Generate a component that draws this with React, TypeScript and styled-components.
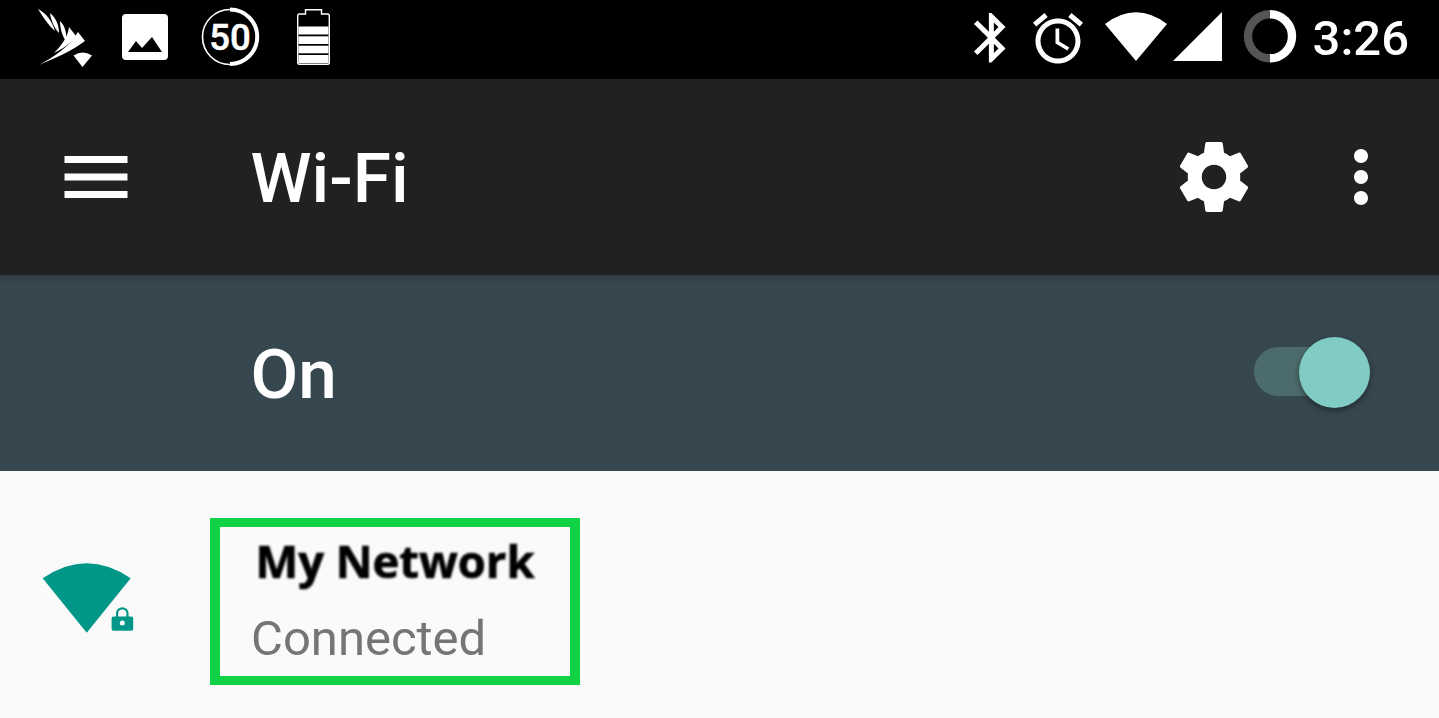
import React from "react";
import styled, { createGlobalStyle } from "styled-components";

const Global = createGlobalStyle`
  html, body { margin: 0; padding: 0; background: #fafafa; }
  body { width: 1439px; height: 718px; overflow: hidden; font-family: Roboto, "Liberation Sans", sans-serif; }
`;

const Screen = styled.div`
  width: 1439px;
  height: 718px;
  display: flex;
  flex-direction: column;
  overflow: hidden;
`;

const StatusBar = styled.div`
  flex: 0 0 79px;
  display: flex;
  justify-content: space-between;
  padding: 0 30px 0 38px;
  background: #000;
  color: #fff;
`;

const StatusGroup = styled.div`
  display: flex;
  align-items: stretch;
`;

const Glyph = styled.svg<{ $gap?: number }>`
  display: block;
  flex: none;
  height: 79px;
  margin-left: ${(p) => p.$gap ?? 0}px;
  overflow: visible;
  fill: #fff;
`;

const Clock = styled.span`
  margin-left: 17px;
  font-size: 49px;
  line-height: 78px;
  font-weight: 500;
`;

const AppBar = styled.header`
  flex: 0 0 196px;
  display: flex;
  align-items: center;
  padding: 0 36px 0 53.5px;
  background: #212121;
  color: #fff;
`;

const ActionIcon = styled.svg`
  display: block;
  flex: none;
  width: 84px;
  height: 84px;
  fill: #fff;
`;

const Title = styled.h1`
  flex: 1;
  margin: 4px 0 0 113px;
  font-size: 69.3px;
  line-height: 80px;
  font-weight: 500;
`;

const Actions = styled.div`
  display: flex;
  align-items: center;
  gap: 63px;
`;

const SwitchBar = styled.section`
  flex: 0 0 196px;
  box-sizing: border-box;
  display: flex;
  align-items: center;
  justify-content: space-between;
  padding: 0 69px 0 250.5px;
  background: #37474f;
  box-shadow: inset 0 9px 8px -7px rgba(0, 0, 0, 0.22);
  color: #fff;
`;

const SwitchLabel = styled.span`
  margin-top: 4px;
  font-size: 69.3px;
  line-height: 80px;
  font-weight: 500;
`;

const Track = styled.div`
  position: relative;
  width: 112px;
  height: 49px;
  margin-right: 4px;
  margin-bottom: 3px;
  border-radius: 25px;
  background: #4c6b6c;
`;

const Thumb = styled.div`
  position: absolute;
  top: -10.5px;
  right: -4px;
  width: 71px;
  height: 71px;
  border-radius: 50%;
  background: #80cbc4;
  box-shadow: 0 3px 6px rgba(0, 0, 0, 0.4);
`;

const NetworkRow = styled.section`
  flex: 1;
  display: flex;
  align-items: flex-start;
  padding: 47px 0 0 42px;
  background: #fafafa;
`;

const SignalIcon = styled.svg`
  display: block;
  flex: none;
  width: 92px;
  height: 72px;
  margin-top: 44px;
  fill: #009688;
`;

const Highlight = styled.div`
  box-sizing: border-box;
  width: 370px;
  height: 167px;
  margin-left: 76px;
  padding-top: 9px;
  border: solid #0fd245;
  border-width: 9px 10px;
  display: flex;
  flex-direction: column;
`;

const NetworkName = styled.div`
  padding-left: 35.5px;
  font-family: "Open Sans", Roboto, sans-serif;
  font-size: 45.3px;
  line-height: 50px;
  font-weight: 700;
  color: #000;
  -webkit-text-stroke: 0.7px #000;
  filter: blur(0.9px);
`;

const NetworkStatus = styled.div`
  margin-top: 25px;
  padding-left: 31px;
  font-size: 49px;
  line-height: 56px;
  font-weight: 400;
  color: #757575;
`;

export default function App() {
  return (
    <Screen>
      <Global />
      <StatusBar>
        <StatusGroup>
          <Glyph viewBox="38 0 54 79" width={54}>
            <path d="M38 9C46 13 52 21 55 31C48 25 43 17 38 9Z" />
            <path d="M50 13C56 18 59 25 59 33C54 28 51 20 50 13Z" />
            <path d="M60 21C65 26 67 33 66 41C62 36 60 28 60 21Z" />
            <path d="M69 27L76 36C72 42 63 49 54 53C61 46 68 37 69 27Z" />
            <path d="M78 32L85 41C72 51 55 58 39 65C54 57 70 46 78 32Z" />
            <path d="M73.5 55.5Q82.5 49.5 92 55.5L82.5 67Z" />
          </Glyph>
          <Glyph viewBox="122 0 46 79" width={46} $gap={30}>
            <path
              fillRule="evenodd"
              d="M126 14H164A4 4 0 0 1 168 18V56A4 4 0 0 1 164 60H126A4 4 0 0 1 122 56V18A4 4 0 0 1 126 14ZM128 52H162L152 37L142 48L136 41Z"
            />
          </Glyph>
          <Glyph viewBox="201 0 58 79" width={58} $gap={33}>
            <path d="M230 9.5A27.5 27.5 0 0 0 230 64.5" fill="none" stroke="#fff" strokeWidth="1.6" />
            <path d="M230 9.5A27 27 0 0 1 230 64" fill="none" stroke="#fff" strokeWidth="4" />
            <text x="230" y="49.5" textAnchor="middle" fontSize="36.5" fontWeight="500" fontFamily="Roboto, sans-serif" stroke="#fff" strokeWidth="0.5">50</text>
          </Glyph>
          <Glyph viewBox="297 0 33 79" width={33} $gap={38}>
            <path
              d="M305.5 14V9.7H321.5V14H327.5Q329.3 14 329.3 16V62.5Q329.3 64.3 327.5 64.3H299.5Q297.7 64.3 297.7 62.5V16Q297.7 14 299.5 14Z"
              fill="none"
              stroke="#fff"
              strokeWidth="1.4"
            />
            <rect x="298.5" y="26.5" width="30" height="8" />
            <rect x="298.5" y="36.3" width="30" height="7.7" />
            <rect x="298.5" y="45.7" width="30" height="7.6" />
            <rect x="298.5" y="55" width="30" height="8" />
          </Glyph>
        </StatusGroup>
        <StatusGroup>
          <Glyph viewBox="975 0 30 79" width={30}>
            <g transform="translate(962.6 8) scale(2.48)">
              <path d="M17.71 7.71L12 2h-1v7.59L6.41 5 5 6.41 10.59 12 5 17.59 6.41 19 11 14.41V22h1l5.71-5.71-4.3-4.29 4.3-4.29zM13 5.83l1.88 1.88L13 9.59V5.83zm1.88 10.46L13 18.17v-3.76l1.88 1.88z" />
            </g>
          </Glyph>
          <Glyph viewBox="1034 0 50 79" width={50} $gap={29}>
            <g transform="translate(1029 8.4) scale(2.5)">
              <path d="M22 5.72l-4.6-3.86-1.29 1.53 4.6 3.86L22 5.72zM7.88 3.39L6.6 1.86 2 5.71l1.29 1.53 4.59-3.85zM12.5 8H11v6l4.75 2.85.75-1.23-4-2.37V8zM12 4c-4.97 0-9 4.03-9 9s4.03 9 9 9c4.97 0 9-4.03 9-9s-4.03-9-9-9zm0 16c-3.87 0-7-3.13-7-7s3.13-7 7-7 7 3.13 7 7-3.13 7-7 7z" />
            </g>
          </Glyph>
          <Glyph viewBox="1106 0 62 79" width={62} $gap={22}>
            <path d="M1106 24Q1137 0.6 1168 24L1137 61Z" />
          </Glyph>
          <Glyph viewBox="1174 0 49 79" width={49} $gap={6}>
            <path d="M1223 12V61H1174Z" />
          </Glyph>
          <Glyph viewBox="1245 0 52 79" width={52} $gap={21.5}>
            <path d="M1271 14.3A22 22 0 0 0 1271 58.3" fill="none" stroke="#555" strokeWidth="8.4" />
            <path d="M1271 14.3A22 22 0 0 1 1271 58.3" fill="none" stroke="#fff" strokeWidth="8.4" />
          </Glyph>
          <Clock>3:26</Clock>
        </StatusGroup>
      </StatusBar>

      <AppBar>
        <ActionIcon viewBox="0 0 24 24">
          <path d="M3 18h18v-2H3v2zm0-5h18v-2H3v2zm0-7v2h18V6H3z" />
        </ActionIcon>
        <Title>Wi-Fi</Title>
        <Actions>
          <ActionIcon viewBox="0 0 24 24">
            <path d="M19.43 12.98c.04-.32.07-.64.07-.98s-.03-.66-.07-.98l2.11-1.65c.19-.15.24-.42.12-.64l-2-3.46c-.12-.22-.39-.3-.61-.22l-2.49 1c-.52-.4-1.08-.73-1.69-.98l-.38-2.65C14.46 2.18 14.25 2 14 2h-4c-.25 0-.46.18-.49.42l-.38 2.65c-.61.25-1.17.59-1.69.98l-2.49-1c-.23-.09-.49 0-.61.22l-2 3.46c-.13.22-.07.49.12.64l2.11 1.65c-.04.32-.07.65-.07.98s.03.66.07.98l-2.11 1.65c-.19.15-.24.42-.12.64l2 3.46c.12.22.39.3.61.22l2.49-1c.52.4 1.08.73 1.69.98l.38 2.65c.03.24.24.42.49.42h4c.25 0 .46-.18.49-.42l.38-2.65c.61-.25 1.17-.59 1.69-.98l2.49 1c.23.09.49 0 .61-.22l2-3.46c.12-.22.07-.49-.12-.64l-2.11-1.65zM12 15.5c-1.93 0-3.5-1.57-3.5-3.5s1.57-3.5 3.5-3.5 3.5 1.57 3.5 3.5-1.57 3.5-3.5 3.5z" />
          </ActionIcon>
          <ActionIcon viewBox="0 0 24 24">
            <path d="M12 8c1.1 0 2-.9 2-2s-.9-2-2-2-2 .9-2 2 .9 2 2 2zm0 2c-1.1 0-2 .9-2 2s.9 2 2 2 2-.9 2-2-.9-2-2-2zm0 6c-1.1 0-2 .9-2 2s.9 2 2 2 2-.9 2-2-.9-2-2-2z" />
          </ActionIcon>
        </Actions>
      </AppBar>

      <SwitchBar>
        <SwitchLabel>On</SwitchLabel>
        <Track>
          <Thumb />
        </Track>
      </SwitchBar>

      <NetworkRow>
        <SignalIcon viewBox="42 562 92 72">
          <path d="M42.7 578.3Q86.7 548.3 130.7 578.3L86.7 632.7Z" />
          <path
            fillRule="evenodd"
            d="M113.5 616.5H116V613.5A6.3 6.3 0 0 1 128.6 613.5V616.5H131.2Q133.2 616.5 133.2 618.5V628.8Q133.2 630.8 131.2 630.8H113.5Q111.6 630.8 111.6 628.8V618.5Q111.6 616.5 113.5 616.5ZM118.2 616.5H126.4V613.5A4.1 4.1 0 0 0 118.2 613.5ZM122.3 620.6A2.5 2.5 0 1 0 122.3 625.6A2.5 2.5 0 1 0 122.3 620.6Z"
          />
        </SignalIcon>
        <Highlight>
          <NetworkName>My Network</NetworkName>
          <NetworkStatus>Connected</NetworkStatus>
        </Highlight>
      </NetworkRow>
    </Screen>
  );
}
